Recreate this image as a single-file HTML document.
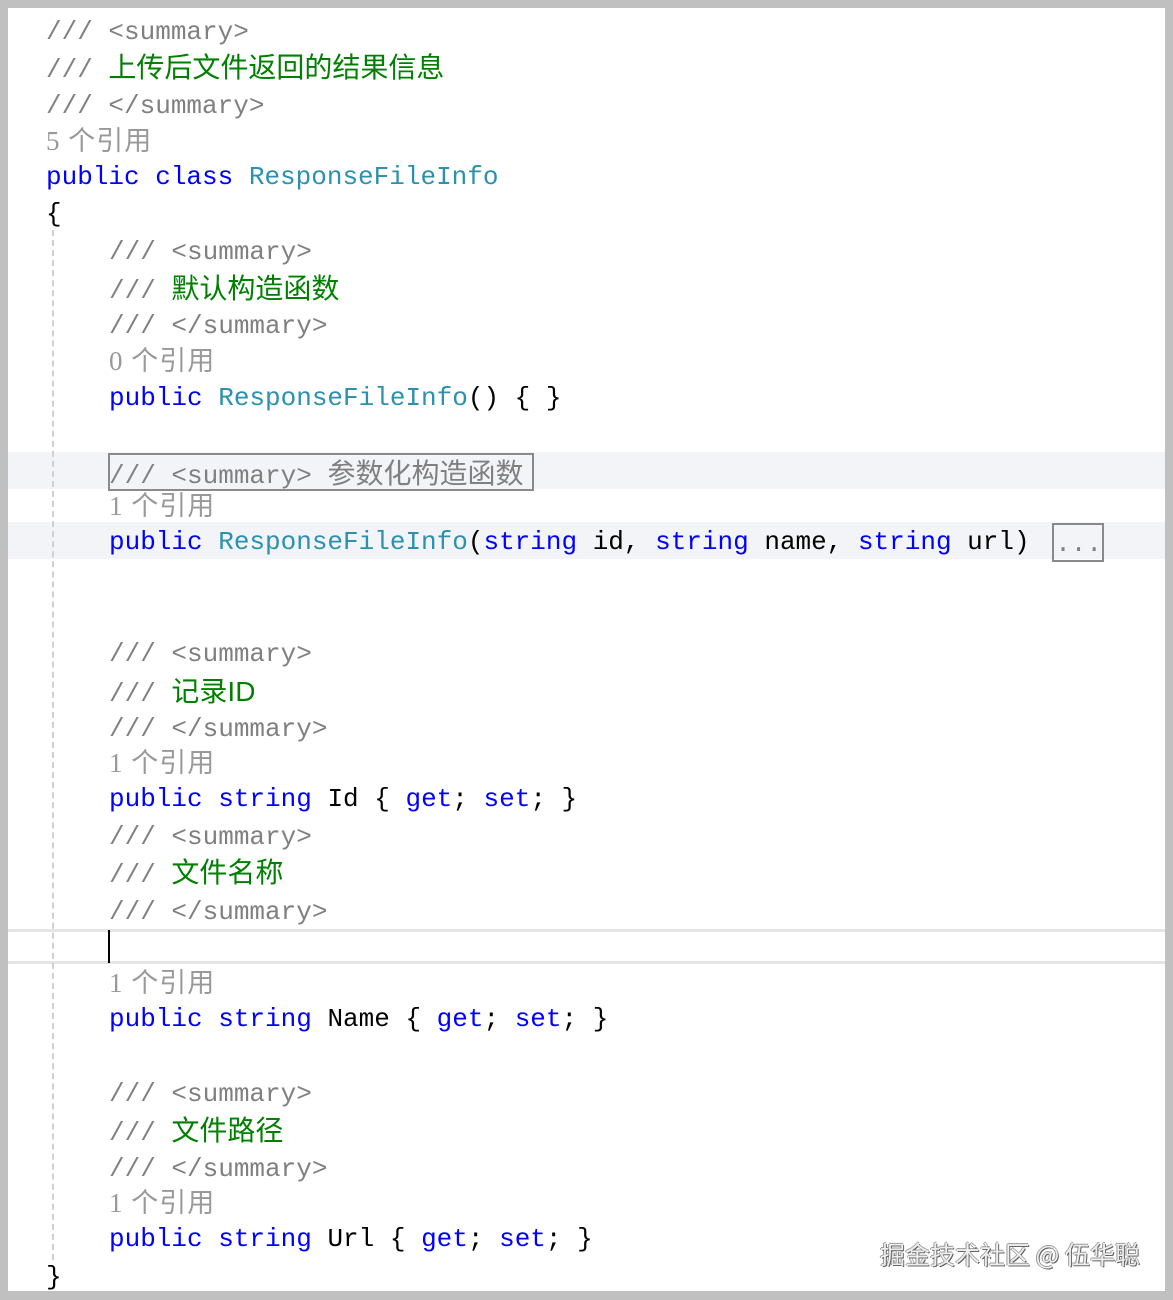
<!DOCTYPE html>
<html><head><meta charset="utf-8"><style>
html,body{margin:0;padding:0}
body{width:1173px;height:1300px;background:#c0c0c0;position:relative;overflow:hidden}
#w{position:absolute;left:8px;top:8px;width:1157px;height:1283px;background:#fff}
.l{position:absolute;left:0;height:36px;line-height:36px;white-space:pre;font-family:"Liberation Mono","Noto Sans CJK SC",monospace;font-size:26px;color:#000;margin-top:2px}
.c{color:#808080}.g{color:#008000;font-family:"Liberation Sans","Noto Sans CJK SC",sans-serif;font-size:28px}
.k{color:#0000ff}.t{color:#2b91af}.r{color:#999;font-family:"Liberation Serif","Noto Sans CJK SC",serif;font-size:27px;letter-spacing:1px}
.band{position:absolute;left:8px;width:1157px;background:#f3f4f8}
</style></head><body>
<div id="w"></div>
<div class="band" style="top:452px;height:37px"></div>
<div class="band" style="top:522px;height:37px"></div>
<div style="position:absolute;left:8px;width:1157px;top:929px;height:3px;background:#e4e4e8"></div>
<div style="position:absolute;left:8px;width:1157px;top:961px;height:3px;background:#e4e4e8"></div>
<div style="position:absolute;left:52px;top:230px;height:1030px;border-left:2px dashed #d0d0d0"></div>
<div style="position:absolute;left:108px;top:930px;width:2px;height:33px;background:#000"></div>
<div style="position:absolute;left:108px;top:453px;width:422px;height:34px;border:2px solid #8a8a8a"></div>
<div style="position:absolute;left:1052px;top:523px;width:48px;height:35px;border:2px solid #8a8a8a"></div>

<div class="l c" style="left:46px;top:12px">/// &lt;summary&gt;</div>
<div class="l" style="left:46px;top:48px"><span class="c">/// </span><span class="g">上传后文件返回的结果信息</span></div>
<div class="l c" style="left:46px;top:86px">/// &lt;/summary&gt;</div>
<div class="l r" style="left:46px;top:121px">5 个引用</div>
<div class="l" style="left:46px;top:157px"><span class="k">public class </span><span class="t">ResponseFileInfo</span></div>
<div class="l" style="left:46px;top:194px">{</div>

<div class="l c" style="left:109px;top:232px">/// &lt;summary&gt;</div>
<div class="l" style="left:109px;top:269px"><span class="c">/// </span><span class="g">默认构造函数</span></div>
<div class="l c" style="left:109px;top:306px">/// &lt;/summary&gt;</div>
<div class="l r" style="left:109px;top:341px">0 个引用</div>
<div class="l" style="left:109px;top:378px"><span class="k">public </span><span class="t">ResponseFileInfo</span>() { }</div>

<div class="l c" style="left:109px;top:452px">/// &lt;summary&gt; <span style="font-family:'Noto Sans CJK SC',sans-serif;font-size:28px">参数化构造函数</span></div>
<div class="l r" style="left:109px;top:486px">1 个引用</div>
<div class="l" style="left:109px;top:522px"><span class="k">public </span><span class="t">ResponseFileInfo</span>(<span class="k">string</span> id, <span class="k">string</span> name, <span class="k">string</span> url) <span class="c" style="position:relative;left:10px;top:2px">...</span></div>

<div class="l c" style="left:109px;top:634px">/// &lt;summary&gt;</div>
<div class="l" style="left:109px;top:672px"><span class="c">/// </span><span class="g">记录ID</span></div>
<div class="l c" style="left:109px;top:709px">/// &lt;/summary&gt;</div>
<div class="l r" style="left:109px;top:743px">1 个引用</div>
<div class="l" style="left:109px;top:779px"><span class="k">public string</span> Id { <span class="k">get</span>; <span class="k">set</span>; }</div>
<div class="l c" style="left:109px;top:817px">/// &lt;summary&gt;</div>
<div class="l" style="left:109px;top:853px"><span class="c">/// </span><span class="g">文件名称</span></div>
<div class="l c" style="left:109px;top:892px">/// &lt;/summary&gt;</div>
<div class="l r" style="left:109px;top:963px">1 个引用</div>
<div class="l" style="left:109px;top:999px"><span class="k">public string</span> Name { <span class="k">get</span>; <span class="k">set</span>; }</div>

<div class="l c" style="left:109px;top:1074px">/// &lt;summary&gt;</div>
<div class="l" style="left:109px;top:1111px"><span class="c">/// </span><span class="g">文件路径</span></div>
<div class="l c" style="left:109px;top:1149px">/// &lt;/summary&gt;</div>
<div class="l r" style="left:109px;top:1183px">1 个引用</div>
<div class="l" style="left:109px;top:1219px"><span class="k">public string</span> Url { <span class="k">get</span>; <span class="k">set</span>; }</div>
<div class="l" style="left:46px;top:1257px">}</div>

<div style="position:absolute;left:880px;top:1236px;font-family:'Noto Sans CJK SC',sans-serif;font-size:25px;color:#eee;text-shadow:1px 1px 0 #666,-1px 0 0 #999,0 -1px 0 #999;white-space:nowrap">掘金技术社区 @ 伍华聪</div>
</body></html>
